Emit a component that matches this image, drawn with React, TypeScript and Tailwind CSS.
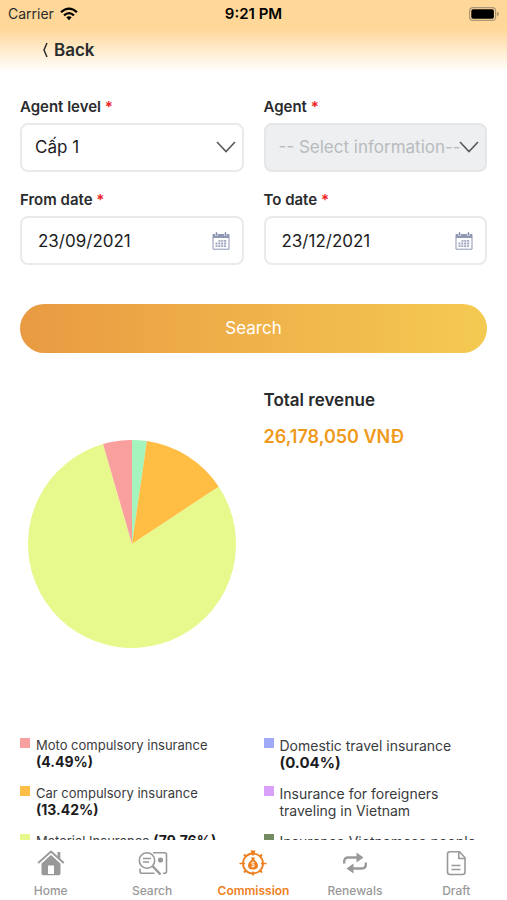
import { useState } from 'react';
import type { ReactNode } from 'react';

type Slice = {
  name: string;
  percent: number;
  color: string;
};

type LegendItem = {
  name: string;
  percent?: string;
  swatch: string;
};

const slices: Slice[] = [
  { name: 'Other', percent: 2.29, color: '#a5f3bd' },
  { name: 'Car compulsory insurance', percent: 13.42, color: '#ffbd44' },
  { name: 'Material Insurance', percent: 79.8, color: '#e7f98c' },
  { name: 'Moto compulsory insurance', percent: 4.49, color: '#f9a09f' },
];

const leftLegend: LegendItem[] = [
  { name: 'Moto compulsory insurance', percent: '(4.49%)', swatch: 'bg-[#f7a09f]' },
  { name: 'Car compulsory insurance', percent: '(13.42%)', swatch: 'bg-[#fdbd47]' },
  { name: 'Material Insurance', percent: '(79.76%)', swatch: 'bg-[#e7f98c]' },
];

const rightLegend: LegendItem[] = [
  { name: 'Domestic travel insurance', percent: '(0.04%)', swatch: 'bg-[#a0a8f8]' },
  { name: 'Insurance for foreigners traveling in Vietnam', swatch: 'bg-[#d8a0f8]' },
  { name: 'Insurance Vietnamese people', swatch: 'bg-[#748a62]' },
];

function PieChart({ data }: { data: Slice[] }) {
  const point = (value: number) => {
    const angle = (value / 100) * Math.PI * 2;
    return `${104 + 104 * Math.sin(angle)} ${104 - 104 * Math.cos(angle)}`;
  };

  let start = 0;
  return (
    <svg viewBox="0 0 208 208" className="w-52 h-52" role="img" aria-label="Revenue by insurance type">
      {data.map((slice) => {
        const from = start;
        start += slice.percent;
        return (
          <path
            key={slice.name}
            d={`M104 104 L${point(from)} A104 104 0 ${slice.percent > 50 ? 1 : 0} 1 ${point(start)} Z`}
            fill={slice.color}
          />
        );
      })}
    </svg>
  );
}

function Field({ id, label, children }: { id: string; label: string; children: ReactNode }) {
  return (
    <div>
      <label htmlFor={id} className="block text-[15px] leading-5 font-semibold text-[#2a2b2d]">
        {label} <span className="text-[#ee1c25]">*</span>
      </label>
      <div className="relative mt-1.5">{children}</div>
    </div>
  );
}

function ChevronIcon() {
  return (
    <svg viewBox="0 0 20 12" className="absolute right-2 top-4.5 w-5 h-3 pointer-events-none" fill="none" stroke="#58595b" strokeWidth="1.6">
      <path d="M1 1l9 9.500 9-9.500" />
    </svg>
  );
}

function CalendarIcon() {
  return (
    <svg viewBox="0 0 18 18" className="absolute right-3.5 top-4 w-4.5 h-4.5 pointer-events-none" fill="none">
      <path d="M1 2.500h16v14.700H1z" stroke="#8f97b3" />
      <path d="M1 2.500h16v3.500H1z" fill="#8f97b3" />
      <path d="M4.500 0v3.700M13.500 0v3.700" stroke="#fff" strokeWidth="2.600" />
      <path d="M4.500 0.300v3.200M13.500 0.300v3.200" stroke="#7f88a8" strokeWidth="1.500" />
      <path d="M6.500 8.800h8.500M3.500 11.500h11.500M3.500 14.200h11" stroke="#a0a7c0" strokeWidth="1.800" strokeDasharray="2 0.800" />
    </svg>
  );
}

function Legend({ items, nameClass, percentClass }: { items: LegendItem[]; nameClass: string; percentClass: string }) {
  return (
    <ul className="flex flex-col gap-3">
      {items.map((item) => (
        <li key={item.name} className="flex items-start gap-1.5">
          <span className={`mt-[3px] w-2.5 h-2.5 shrink-0 ${item.swatch}`} />
          <p className={`mt-0.5 leading-[17px] text-[#3a3b3d] ${nameClass}`}>
            {item.name} {item.percent && <b className={`font-bold text-[#1c1c1e] ${percentClass}`}>{item.percent}</b>}
          </p>
        </li>
      ))}
    </ul>
  );
}

function HomeIcon() {
  return (
    <svg viewBox="0 0 28 28" className="w-7 h-7" fill="#999">
      <path d="M4.500 14.500v10q0 1.800 1.800 1.800h15.400q1.800 0 1.800-1.800v-10L14 5.800z" />
      <path d="M11 16.500h6v8.500h-6z" fill="#fff" />
      <path d="M1.500 14.200L14 3l12.500 11.200" fill="none" stroke="#fff" strokeWidth="4" />
      <path d="M1.200 14L14 2.600l12.800 11.400" fill="none" stroke="#999" strokeWidth="1.900" />
      <path d="M20.500 3h2.800v7l-2.800-2.500z" />
    </svg>
  );
}

function SearchIcon() {
  return (
    <svg viewBox="0 0 32 28" className="w-8 h-7" fill="none" stroke="#999" strokeWidth="1.600">
      <path d="M17 3.800h11.500q2 0 2 2v16.400q0 2-2 2h-1.500M18.500 24.200H6q-2 0-2-2v-2.500" />
      <circle cx="11" cy="11.500" r="7.700" />
      <path d="M7 9.500h8M7 13h6" strokeWidth="1.400" />
      <path d="M16.500 17l8 8.500" strokeWidth="2.400" />
      <circle cx="24.500" cy="11" r="2.600" fill="#999" stroke="none" />
    </svg>
  );
}

function CommissionIcon() {
  return (
    <svg viewBox="0 0 28 28" className="w-7 h-7" fill="none" stroke="#ee7f1e">
      <circle cx="14" cy="14.500" r="10" strokeWidth="1.800" />
      <path d="M14 3v3.500M14 22.500v4M.5 14.500h5.500M22 14.500h5.500" strokeWidth="1.600" />
      <path d="M5 5.500l2.500 2.500M23 5.500l-2.500 2.500M5 23.500l2.500-2.500M23 23.500l-2.500-2.500" strokeWidth="2" />
      <path d="M11.500 1.500h5l-1.300 4h-2.400z" fill="#ee7f1e" stroke="none" />
      <path d="M12 8.500h4l-.8 2.200c2.300 1.300 3.800 3.800 3.800 6 0 2.300-1.500 3.800-5 3.800s-5-1.500-5-3.800c0-2.200 1.500-4.700 3.800-6z" fill="#ee7f1e" stroke="none" />
      <path d="M15.700 13.700c-.8-.9-3.200-.8-3.200.6 0 1.500 3.200.9 3.200 2.400 0 1.300-2.500 1.500-3.400.5M14 12.500v6" stroke="#fff" strokeWidth=".8" />
    </svg>
  );
}

function RenewalsIcon() {
  return (
    <svg viewBox="0 0 28 28" className="w-7 h-7" fill="none" stroke="#999" strokeWidth="2.400">
      <path d="M3.200 14.500v-2q0-4 4-4h9.800M24.800 13.500v2q0 4-4 4H11" />
      <path d="M15.500 3.500l7 5-7 5zM12.500 14.500l-7 5 7 5z" fill="#999" stroke="none" />
    </svg>
  );
}

function DraftIcon() {
  return (
    <svg viewBox="0 0 28 28" className="w-7 h-7" fill="none" stroke="#999" strokeWidth="1.600" strokeLinejoin="round">
      <path d="M8 2.800h9.500L23 8.800v14.200q0 2.500-2.500 2.500H8Q5.500 25.500 5.500 23V5.300Q5.500 2.800 8 2.800z" />
      <path d="M16.800 3v6.500h6M9.500 16.500h9M9.500 20.500h9" />
    </svg>
  );
}

const tabs = [
  { label: 'Home', Icon: HomeIcon },
  { label: 'Search', Icon: SearchIcon },
  { label: 'Commission', Icon: CommissionIcon },
  { label: 'Renewals', Icon: RenewalsIcon },
  { label: 'Draft', Icon: DraftIcon },
];

export default function App() {
  const [fromDate, setFromDate] = useState('23/09/2021');
  const [toDate, setToDate] = useState('23/12/2021');
  const activeTab = 'Commission';

  return (
    <div className="flex flex-col h-dvh bg-white font-[Inter,sans-serif]">
      <header className="shrink-0 h-[72px] bg-linear-to-b from-[#ffd798] from-40% to-white">
        {/* Status bar */}
        <div className="grid grid-cols-3 items-center h-7 px-2 text-sm text-black">
          <div className="flex items-center gap-1.5 text-[#2a2b2d]">
            Carrier
            <svg viewBox="0 0 18 14" className="w-4.5 h-3.5" fill="none" stroke="#000" strokeWidth="2.200">
              <path d="M1 5.300Q9-2 17 5.300M4 8.300q5-4.400 10 0" />
              <path d="M6.300 10.300q2.700-2.200 5.400 0L9 13.300z" fill="#000" stroke="none" />
            </svg>
          </div>
          <p className="text-center text-[15px] font-semibold">9:21 PM</p>
          <svg viewBox="0 0 30 14" className="w-7.5 h-3.5 justify-self-end">
            <rect x=".6" y=".6" width="26" height="12.800" rx="3.500" fill="none" stroke="#a89878" strokeWidth="1.200" />
            <rect x="2.300" y="2.300" width="22.600" height="9.400" rx="1.800" fill="#000" />
            <path d="M28 4.800q2 .7 2 2.200t-2 2.200z" fill="#a89878" />
          </svg>
        </div>
        <button type="button" className="flex items-center gap-1.5 ml-10 mt-2.5 text-[17px] leading-6 font-semibold text-[#2a2b2d]">
          <svg viewBox="0 0 8 16" className="w-2 h-4" fill="none" stroke="#2a2b2d" strokeWidth="1.500">
            <path d="M7 1L4 8l3 7" />
          </svg>
          Back
        </button>
      </header>

      <main className="flex-1 min-h-0 overflow-y-auto [scrollbar-width:none] px-5 pt-[25px]">
        <form onSubmit={(e) => e.preventDefault()}>
          <div className="grid grid-cols-2 gap-x-5 gap-y-4.5">
            <Field id="level" label="Agent level">
              <select id="level" className="block w-full h-[49px] pl-[13px] pr-8 appearance-none rounded-lg border-2 border-[#e9eaeb] bg-white text-[17px] text-[#1c1c1e]">
                <option>Cấp 1</option>
              </select>
              <ChevronIcon />
            </Field>
            <Field id="agent" label="Agent">
              <select
                id="agent"
                disabled
                className="block w-full h-[49px] pl-[13px] pr-6 appearance-none rounded-lg border-2 border-[#e4e6e8] bg-[#edeff0] text-[17px] text-[#b9bbbe] opacity-100"
              >
                <option>-- Select information--</option>
              </select>
              <ChevronIcon />
            </Field>
            <Field id="from" label="From date">
              <input
                id="from"
                type="text"
                value={fromDate}
                onChange={(e) => setFromDate(e.target.value)}
                className="block w-full h-[49px] pl-4 pr-10 rounded-lg border-2 border-[#e9eaeb] text-[17px] text-[#1c1c1e]"
              />
              <CalendarIcon />
            </Field>
            <Field id="to" label="To date">
              <input
                id="to"
                type="text"
                value={toDate}
                onChange={(e) => setToDate(e.target.value)}
                className="block w-full h-[49px] pl-4 pr-10 rounded-lg border-2 border-[#e9eaeb] text-[17px] text-[#1c1c1e]"
              />
              <CalendarIcon />
            </Field>
          </div>
          <button type="submit" className="block w-full h-[49px] mt-[39px] rounded-full bg-linear-to-r from-[#e99a42] to-[#f4ca52] text-[17px] text-white">
            Search
          </button>
        </form>

        <section className="grid grid-cols-2 gap-x-5 mt-[35px]">
          <div className="pt-13 pl-2">
            <PieChart data={slices} />
          </div>
          <div>
            <h2 className="text-[17px] leading-6 font-semibold text-[#2a2b2d]">Total revenue</h2>
            <p className="mt-[13px] text-lg leading-6 font-semibold text-[#f09a1c]">26,178,050 VNĐ</p>
          </div>
        </section>

        <section className="grid grid-cols-2 gap-x-5 mt-[87px] pb-4">
          <Legend items={leftLegend} nameClass="text-[13px]" percentClass="text-[14px] leading-none" />
          <Legend items={rightLegend} nameClass="text-[14px]" percentClass="text-[15px] leading-none" />
        </section>
      </main>

      <nav className="shrink-0 grid grid-cols-5 h-[60px] pt-[9px] bg-white">
        {tabs.map(({ label, Icon }) => (
          <a
            key={label}
            href={`#${label.toLowerCase()}`}
            className={`flex flex-col items-center gap-1 text-xs leading-5 ${
              label === activeTab ? 'text-[#ee7f1e] font-semibold' : 'text-[#999] font-medium'
            }`}
          >
            <Icon />
            {label}
          </a>
        ))}
      </nav>
    </div>
  );
}
